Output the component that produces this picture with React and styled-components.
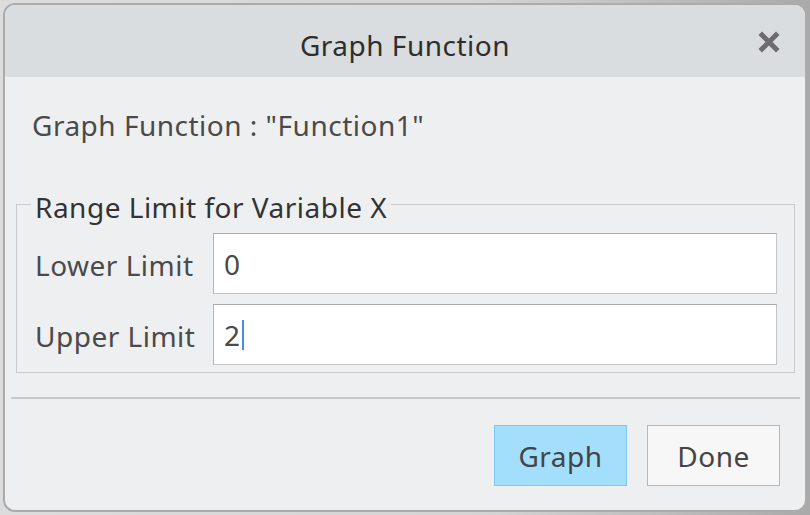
import React from "react";
import styled, { createGlobalStyle } from "styled-components";

const Global = createGlobalStyle`
  html, body { margin: 0; padding: 0; }
  body {
    width: 810px;
    height: 515px;
    overflow: hidden;
    background: linear-gradient(90deg, #dcdcdc 0%, #d4d4d4 60%, #aaaaaa 99.5%);
    font-family: "Noto Sans", "Open Sans", sans-serif;
  }
`;

const Dialog = styled.div`
  box-sizing: border-box;
  margin: 3px 0 0 3px;
  width: 804px;
  height: 509px;
  border: 2px solid #ababab;
  border-radius: 12px;
  overflow: hidden;
  background: #eeeff1;
  display: flex;
  flex-direction: column;
  font-size: 28px;
  letter-spacing: 0.5px;
`;

const TitleBar = styled.div`
  height: 72px;
  flex: none;
  background: #dadddf;
  display: grid;
  grid-template-columns: 1fr auto 1fr;
  align-items: center;
`;

const Title = styled.div`
  grid-column: 2;
  padding-top: 7px;
  color: #2e2e2e;
`;

const CloseButton = styled.button`
  grid-column: 3;
  justify-self: end;
  margin: 2px 25px 0 0;
  width: 22px;
  height: 22px;
  padding: 0;
  border: none;
  background: transparent;
  display: flex;
  align-items: center;
  justify-content: center;
`;

const Heading = styled.div`
  margin: 29px 0 0 27px;
  color: #4a4a4a;
  line-height: 38px;
`;

const Group = styled.fieldset`
  margin: 42px 10px 0 11px;
  padding: 11px 17px 7px 18px;
  border: 1px solid #c9cacc;
  display: grid;
  grid-template-columns: 178px 1fr;
  row-gap: 10px;
  align-items: center;
`;

const Legend = styled.legend`
  padding: 6px 4px 0;
  margin-left: -4px;
  line-height: 30px;
  color: #333;
`;

const Label = styled.label`
  padding-top: 2px;
  color: #4a4a4a;
`;

const Field = styled.div`
  box-sizing: border-box;
  height: 61px;
  background: #fff;
  border: 1px solid #c4c4c4;
  border-top-color: #a9a9a9;
  border-left-color: #b4b4b4;
  display: flex;
  align-items: center;
  padding-left: 10px;
  color: #4a4a4a;
`;

const Caret = styled.span`
  display: inline-block;
  width: 2px;
  height: 30px;
  margin-left: 1px;
  background: #4a90d9;
`;

const Separator = styled.hr`
  margin: 24px 5px 0 6px;
  border: none;
  height: 2px;
  background: #c8c9cb;
`;

const Footer = styled.div`
  display: flex;
  justify-content: flex-end;
  gap: 20px;
  padding: 26px 25px 0 0;
`;

const Button = styled.button`
  box-sizing: border-box;
  width: 133px;
  height: 61px;
  font-family: inherit;
  font-size: inherit;
  letter-spacing: inherit;
  color: #444;
  background: ${(p) => (p.$primary ? "#a3dffd" : "#f7f7f7")};
  border: 1px solid ${(p) => (p.$primary ? "#7ccaf4" : "#b7b7b7")};
  padding: 0;
`;

export default function App() {
  return (
    <>
      <Global />
      <Dialog>
        <TitleBar>
          <Title>Graph Function</Title>
          <CloseButton aria-label="Close">
            <svg width="22" height="22" viewBox="0 0 22 22">
              <path
                d="M4 4 L18 18 M18 4 L4 18"
                stroke="#6c6c70"
                strokeWidth="5"
                strokeLinecap="square"
              />
            </svg>
          </CloseButton>
        </TitleBar>
        <Heading>Graph Function : "Function1"</Heading>
        <Group>
          <Legend>Range Limit for Variable X</Legend>
          <Label>Lower Limit</Label>
          <Field>0</Field>
          <Label>Upper Limit</Label>
          <Field>
            2<Caret />
          </Field>
        </Group>
        <Separator />
        <Footer>
          <Button $primary>Graph</Button>
          <Button>Done</Button>
        </Footer>
      </Dialog>
    </>
  );
}
